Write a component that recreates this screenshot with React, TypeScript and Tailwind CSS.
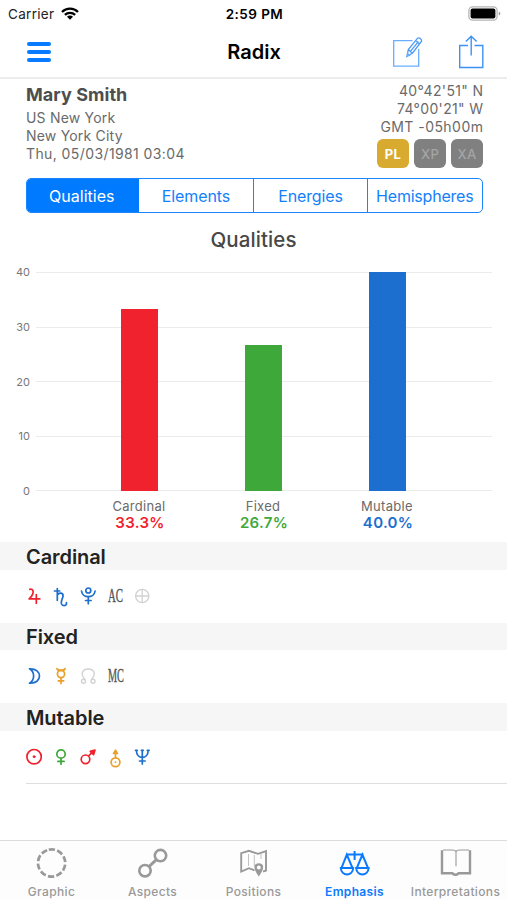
import type { ReactNode } from "react";

const RED = "#f0222d";
const GREEN = "#3fa83a";
const BLUE = "#1c6fcf";
const ORANGE = "#e9a02c";
const SILVER = "#d2d2d2";

function StatusBar() {
  return (
    <div className="flex h-[27px] items-center justify-between pl-[8px] pr-[6px]">
      <div className="flex w-[150px] items-center gap-[7px]">
        <span className="pt-px text-[13.5px] tracking-[0.3px] text-[#222]">Carrier</span>
        <svg width="18" height="13" viewBox="0 0 18 13" fill="none" stroke="#000" strokeWidth="2.3">
          <path d="M1 5a11.200 11.200 0 0 1 16 0" />
          <path d="M3.900 7.900a7.200 7.200 0 0 1 10.200 0" />
          <path d="M9 12.800 6 9.800a4.200 4.200 0 0 1 6 0Z" fill="#000" stroke="none" />
        </svg>
      </div>
      <span className="pt-px text-[13.5px] font-semibold tracking-[0.45px] text-black">2:59 PM</span>
      <div className="flex w-[150px] justify-end">
        <svg width="33" height="15" viewBox="0 0 33 15">
          <rect x="0.9" y="0.9" width="28.2" height="13.2" rx="3.6" fill="none" stroke="#b4b4b4" strokeWidth="1.3" />
          <rect x="2.6" y="2.6" width="24.8" height="9.8" rx="2" fill="#000" />
          <path d="M30.800 5.400v4.200q1.600-.7 1.600-2.100t-1.600-2.100Z" fill="#999" />
        </svg>
      </div>
    </div>
  );
}

function NavBar() {
  return (
    <div className="flex h-[52px] items-center justify-between border-b-2 border-[#ececec] pl-[27px] pr-[23px]">
      <div className="flex w-[92px] flex-col gap-1">
        <span className="h-1 w-6 rounded-full bg-[#0a7aff]" />
        <span className="h-1 w-6 rounded-full bg-[#0a7aff]" />
        <span className="h-1 w-6 rounded-full bg-[#0a7aff]" />
      </div>
      <span className="mr-[3px] text-[20px] font-semibold text-black">Radix</span>
      <div className="flex w-[92px] justify-between">
        <svg width="31" height="34" viewBox="0 0 31 34" fill="none" stroke="#6aaeff" strokeWidth="1.3">
          <path d="M20.500 5.700H1.700v25.500h25V14" />
          <path d="m15 21.300 1.300-6.700L25.600 3.200q1.300-.9 2.700.2t1.300 2.800l-9.200 12L15 21.300Zm1.300-6.700 4.100 3.600M23.700 5.600l4 3.300M18.400 16.300l8-9.700" stroke="#4b9bf5" />
          <path d="m15 21.300.6-2.700 1.900 1.500Z" fill="#4b9bf5" />
        </svg>
        <svg width="26" height="34" viewBox="0 0 26 34" fill="none" stroke="#3c93f5" strokeWidth="1.400">
          <path d="M10 10.500H1.700v22h23.100v-22H16.500M13.200 20.500V1.500M7.800 6.600l5.400-5.400 5.400 5.400" />
        </svg>
      </div>
    </div>
  );
}

function ChartInfo() {
  return (
    <div className="flex h-[99px] justify-between pl-[26px] pr-[24px] pt-[3px] text-[14px] leading-[18px] text-[#6a6a6a]">
      <div className="flex flex-col pt-px tracking-[0.2px]">
        <div className="mb-[2px] text-[18px] font-bold leading-6 tracking-[0.05px] text-[#4e4e4e]">Mary Smith</div>
        <div>US New York</div>
        <div>New York City</div>
        <div className="tracking-[0.4px]">Thu, 05/03/1981 03:04</div>
      </div>
      <div className="flex flex-col items-end">
        <div className="mr-[-0.4px] tracking-[0.35px]">40°42'51" N</div>
        <div className="mr-[-0.4px] tracking-[0.35px]">74°00'21" W</div>
        <div className="mr-[-0.4px] tracking-[0.45px]">GMT -05h00m</div>
        <div className="mt-[3px] flex gap-[5px] text-[13px] tracking-[0.4px]">
          <span className="flex h-[29px] w-8 items-center justify-center rounded-md bg-[#d8ab30] font-bold text-white">PL</span>
          <span className="flex h-[29px] w-8 items-center justify-center rounded-md bg-[#808080] font-medium text-[#a5a5a5]">XP</span>
          <span className="flex h-[29px] w-8 items-center justify-center rounded-md bg-[#808080] font-medium text-[#a5a5a5]">XA</span>
        </div>
      </div>
    </div>
  );
}

function Segments() {
  return (
    <div className="ml-[25.5px] mr-[24.5px] flex h-[35px] overflow-hidden rounded-[5px] border border-[#1b84ff] text-[16px] text-[#1480fa]">
      <div className="flex w-[112.5px] items-center justify-center bg-[#007aff] pr-[2px] text-white">Qualities</div>
      <div className="flex w-[114px] items-center justify-center tracking-[-0.1px]">Elements</div>
      <div className="flex w-[114px] items-center justify-center border-l border-[#1b84ff] tracking-[-0.15px]">Energies</div>
      <div className="flex flex-1 items-center justify-center border-l border-[#1b84ff] tracking-[-0.22px]">Hemispheres</div>
    </div>
  );
}

const bars = [
  { name: "Cardinal", value: 33.3, color: RED },
  { name: "Fixed", value: 26.7, color: GREEN },
  { name: "Mutable", value: 40, color: BLUE },
];

function BarChart() {
  return (
    <div className="h-[329px] pt-[13px]">
      <div className="text-center text-[20.5px] font-medium leading-7 tracking-[0.1px] text-[#484848]">Qualities</div>
      <div className="mt-[18px] grid h-[219px] grid-cols-[36px_1fr_15px]">
        <div className="flex flex-col justify-between pr-[6px] text-right text-[11px] leading-[0px] text-[#777]">
          <span>40</span>
          <span>30</span>
          <span>20</span>
          <span>10</span>
          <span>0</span>
        </div>
        <div className="grid">
          <div className="col-start-1 row-start-1 flex flex-col justify-between">
            {[40, 30, 20, 10, 0].map((n) => (
              <div key={n} className="h-px bg-[#ebebeb]" />
            ))}
          </div>
          <div className="col-start-1 row-start-1 flex items-end gap-[87px] pl-[85px]">
            {bars.map((b) => (
              <div key={b.name} className="w-[37px]" style={{ height: `${b.value * 2.5}%`, background: b.color }} />
            ))}
          </div>
        </div>
      </div>
      <div className="flex gap-6 pl-[89px] pt-[6px] text-center">
        {bars.map((b) => (
          <div key={b.name} className="w-[100px]">
            <div className="text-[13px] leading-[18px] tracking-[0.3px] text-[#6a6a6a]">{b.name}</div>
            <div className="pl-[2px] text-[15px] font-semibold leading-4 tracking-[0.3px]" style={{ color: b.color }}>
              {b.value.toFixed(1)}%
            </div>
          </div>
        ))}
      </div>
    </div>
  );
}

function Glyph({ color, children }: { color: string; children: ReactNode }) {
  return (
    <svg width="27" height="24" viewBox="0 0 27 24" fill="none" stroke={color} strokeWidth="1.7" strokeLinecap="round" strokeLinejoin="round">
      {children}
    </svg>
  );
}

function Angle({ label, squeeze }: { label: string; squeeze: number }) {
  return (
    <svg width="27" height="24" viewBox="0 0 27 24">
      <text x="0" y="18" transform={`translate(7 0) scale(${squeeze} 1)`} fontFamily="Liberation Serif, serif" fontSize="18" fill="#555" stroke="#555" strokeWidth="0.35">
        {label}
      </text>
    </svg>
  );
}

function Section({ title, children }: { title: string; children: ReactNode }) {
  return (
    <div className="flex h-[80.5px] flex-col">
      <div className="flex h-[27.500px] items-center bg-[#f6f6f6] pl-[26px] pt-[2px] text-[20px] font-semibold leading-6 tracking-[-0.08px] text-[#222]">{title}</div>
      <div className="flex h-[52px] items-center pl-5">{children}</div>
    </div>
  );
}

function Placements() {
  return (
    <div>
      <Section title="Cardinal">
        <Glyph color={RED}>
          <path d="M9.800 5.300c2.900-.7 4 1.700 3 4.600-.7 2.100-2.200 3.600-3.700 5h10.700M16.300 10.500v8.700" />
        </Glyph>
        <Glyph color={BLUE}>
          <path d="M7.500 7h5.200M10.300 4.500v11.800M10.300 11c1.800-3 6.200-2.500 5.700 1.300-.4 2.500-2.500 5-1.500 7.700.8 2 4 2 4.900.3v-1.600" />
        </Glyph>
        <Glyph color={BLUE}>
          <circle cx="14.300" cy="6.500" r="2.500" />
          <path d="M7.500 7c1 7.500 12.600 7.500 13.600 0M14.300 12.700v7M11.500 16.500h5.600" />
        </Glyph>
        <Angle label="AC" squeeze={0.6} />
        <Glyph color={SILVER}>
          <circle cx="14.200" cy="12" r="6.600" strokeWidth="1.300" />
          <path d="M14.200 5.400v13.200M7.600 12h13.200" strokeWidth="1.300" />
        </Glyph>
      </Section>
      <Section title="Fixed">
        <Glyph color={BLUE}>
          <path d="M9.500 4.800c13.300-.7 13.300 15.400 0 14.400 5.500-3.200 5.500-11.200 0-14.400Z" />
        </Glyph>
        <Glyph color={ORANGE}>
          <circle cx="14" cy="10" r="3.600" />
          <path d="M10 4.500c.4 2.500 7.600 2.500 8 0M14 13.600v6M11.300 16.800h5.400" />
        </Glyph>
        <Glyph color={SILVER}>
          <circle cx="9.500" cy="17.200" r="2" strokeWidth="1.400" />
          <circle cx="19" cy="17.200" r="2" strokeWidth="1.400" />
          <path d="M10.900 15.400C5.200 8.500 9.800 5 14.250 5s9.050 3.500 3.350 10.400" strokeWidth="1.400" />
        </Glyph>
        <Angle label="MC" squeeze={0.57} />
      </Section>
      <Section title="Mutable">
        <Glyph color={RED}>
          <circle cx="14.100" cy="11.700" r="7.200" />
          <circle cx="14.100" cy="11.700" r="1" fill={RED} strokeWidth="1" />
        </Glyph>
        <Glyph color={GREEN}>
          <circle cx="14" cy="9" r="4.200" />
          <path d="M14 13.300v5.900M10.900 16.400h6.200" />
        </Glyph>
        <Glyph color={RED}>
          <circle cx="11.500" cy="14.300" r="4.300" />
          <path d="m14.600 11 3.300-3.400" />
          <path d="m21 5-4.700 1.400 3.300 3.200Z" fill={RED} />
        </Glyph>
        <Glyph color={ORANGE}>
          <circle cx="14.500" cy="17.300" r="4.400" />
          <circle cx="14.500" cy="17.300" r=".4" strokeWidth="1.200" />
          <path d="M14.500 12.800V6M14.500 5.200l-1.900 3.200h3.800Z" fill={ORANGE} />
        </Glyph>
        <Glyph color={BLUE}>
          <path d="M8.400 5.300c0 9.500 11.800 9.500 11.800 0M14.300 5v14M11.500 16h5.600M7.500 5.300h1.800M13.400 5.300h1.800M19.300 5.300h1.800" />
        </Glyph>
      </Section>
      <div className="mt-[-0.5px] ml-[26px] h-px bg-[#dedede]" />
    </div>
  );
}

function Tab({ label, active, children }: { label: string; active?: boolean; children: ReactNode }) {
  return (
    <div className={`flex w-[101px] shrink-0 flex-col items-center pt-[6px] ${active ? "font-semibold text-[#0a7aff]" : "font-medium text-[#999]"}`}>
      <svg width="36" height="34" viewBox="0 0 36 34" fill="none" stroke="currentColor">
        {children}
      </svg>
      <span className="mt-[3px] whitespace-nowrap text-[12px] leading-4 tracking-[0.35px]">{label}</span>
    </div>
  );
}

function TabBar() {
  return (
    <div className="flex h-[60px] w-[507px] border-t border-[#dcdcdc] bg-[#fdfdfd] pl-px">
      <Tab label="Graphic">
        <circle cx="17.600" cy="16" r="13.600" strokeWidth="2.700" strokeDasharray="6.200 2.345" transform="rotate(-102 17.600 16)" />
      </Tab>
      <Tab label="Aspects">
        <circle cx="10" cy="23.700" r="5.700" strokeWidth="2.600" />
        <circle cx="25.500" cy="8.600" r="5.700" strokeWidth="2.600" />
        <path d="m14.100 19.500 7.300-6.900" strokeWidth="3" />
      </Tab>
      <Tab label="Positions">
        <path d="M18.500 23.300 13 21.200l-7.800 3.300V6.200L13 3.800l9 3 8-2.800v19.500l-3 1.200" strokeWidth="1.900" />
        <path d="M12.500 7v12M18.300 8v11M25 7v5" strokeWidth="1" opacity="0.6" />
        <path d="M22.800 29.500c-6.800-9.200-4.700-13.300 0-13.300s6.800 4.100 0 13.300Zm0-11a2 2 0 1 0 0 4 2 2 0 0 0 0-4Z" fill="currentColor" fillRule="evenodd" stroke="none" />
      </Tab>
      <Tab label="Emphasis" active>
        <path d="M9 7.500h17.500M17.600 4v9M9.800 7.700 4.500 21h11L9.800 7.700Zm15.600 0L19.800 21h11.200L25.400 7.700Z" strokeWidth="2" />
        <path d="M3.800 21c.4 8.500 12 8.500 12.400 0ZM19.200 21c.4 8.500 12 8.500 12.400 0Z" strokeWidth="2" />
      </Tab>
      <Tab label="Interpretations">
        <path d="M4 3.300V26.300h10.500q2.900 3 6 0H32V3.300" strokeWidth="2.400" />
        <path d="M5 3h9q3.500 0 4 1.800.5-1.800 4-1.800h9M18 4.800v14.500" strokeWidth="1.100" />
      </Tab>
    </div>
  );
}

export default function App() {
  return (
    <div className="flex h-[900px] w-[507px] flex-col overflow-hidden bg-white font-[Inter,'Liberation_Sans',sans-serif]">
      <StatusBar />
      <NavBar />
      <ChartInfo />
      <Segments />
      <BarChart />
      <Placements />
      <div className="flex-1" />
      <TabBar />
    </div>
  );
}
